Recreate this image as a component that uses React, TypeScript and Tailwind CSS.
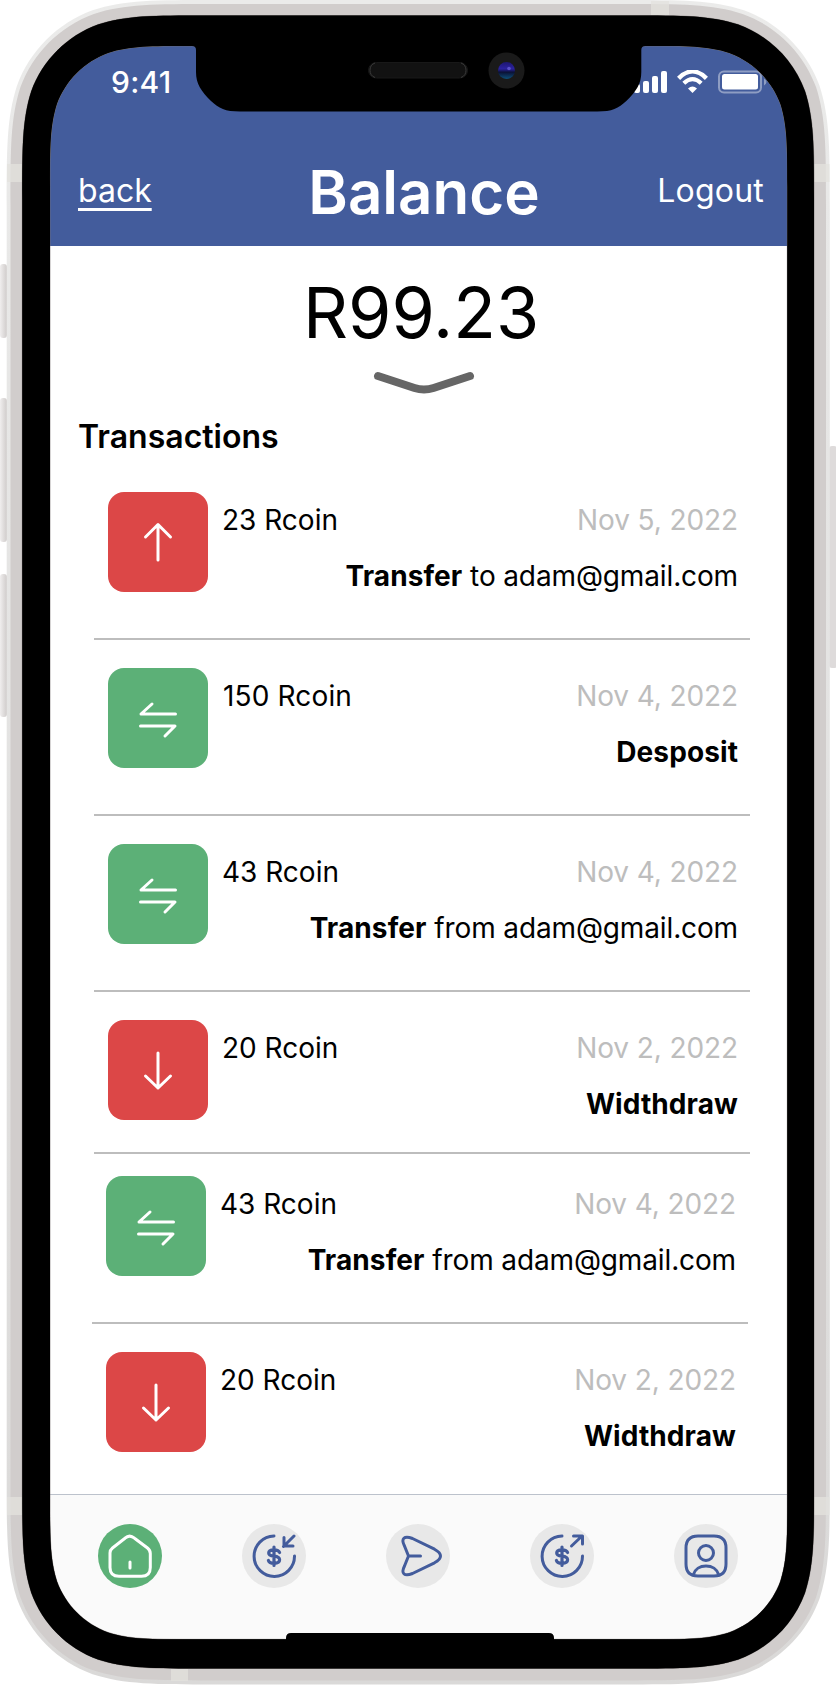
import React from "react";

type Kind = "up" | "down" | "swap";

interface Transaction {
  kind: Kind;
  amount: string;
  date: string;
  action: string;
  detail?: string;
  row: string;
}

const transactions: Transaction[] = [
  { kind: "up", amount: "23 Rcoin", date: "Nov 5, 2022", action: "Transfer", detail: " to adam@gmail.com", row: "ml-[44px] h-[176px] pt-[28px] border-b-2" },
  { kind: "swap", amount: "150 Rcoin", date: "Nov 4, 2022", action: "Desposit", row: "ml-[44px] h-[176px] pt-[28px] border-b-2" },
  { kind: "swap", amount: "43 Rcoin", date: "Nov 4, 2022", action: "Transfer", detail: " from adam@gmail.com", row: "ml-[44px] h-[176px] pt-[28px] border-b-2" },
  { kind: "down", amount: "20 Rcoin", date: "Nov 2, 2022", action: "Widthdraw", row: "ml-[44px] h-[162px] pt-[28px] border-b-2" },
  { kind: "swap", amount: "43 Rcoin", date: "Nov 4, 2022", action: "Transfer", detail: " from adam@gmail.com", row: "ml-[42px] h-[170px] pt-[22px] border-b-2" },
  { kind: "down", amount: "20 Rcoin", date: "Nov 2, 2022", action: "Widthdraw", row: "ml-[42px] h-[170px] pt-[28px]" },
];

const tilePaths: Record<Kind, string> = {
  up: "M50 68V33M37.500 45L50 32.500L62.500 45",
  down: "M50 33V68M37.500 56L50 68L62.500 56",
  swap: "M67.500 46H33L44 36M32.500 58H67L57 68",
};

function Tile({ kind }: { kind: Kind }) {
  return (
    <div className={`size-[100px] shrink-0 rounded-[16px] ${kind === "swap" ? "bg-[#5cb077]" : "bg-[#dc4747]"}`}>
      <svg viewBox="0 0 100 100" className="size-full" fill="none" stroke="#fff" strokeWidth="3" strokeLinecap="round" strokeLinejoin="round">
        <path d={tilePaths[kind]} />
      </svg>
    </div>
  );
}

function TransactionRow({ item }: { item: Transaction }) {
  return (
    <li className={`flex w-[656px] shrink-0 border-[#bdbdbd] pl-[14px] pr-[12px] text-[28px] leading-[34px] ${item.row}`}>
      <Tile kind={item.kind} />
      <div className="flex flex-1 flex-col gap-[22px] pt-[11px] pl-[14px]">
        <div className="flex justify-between">
          <span className={item.amount.startsWith("1") ? "pl-px tracking-[0.15px]" : ""}>{item.amount}</span>
          <span className="tracking-[-0.1px] text-[#bdbdbd]">{item.date}</span>
        </div>
        <p className="text-right tracking-[-0.13px] whitespace-pre">
          <b className="font-bold tracking-[0.1px]">{item.action}</b>
          {item.detail}
        </p>
      </div>
    </li>
  );
}

function StatusBar() {
  return (
    <div className="flex items-center justify-between pt-[18px] pl-[61px] pr-[9px] text-white">
      <span className="text-[30px] leading-[36px] font-medium tracking-[0.3px]">9:41</span>
      <svg width="144" height="24" viewBox="0 0 144 24" fill="#fff">
        <rect x="0" y="14" width="6" height="9" rx="2" />
        <rect x="9" y="11" width="6" height="12" rx="2" />
        <rect x="18" y="6" width="6" height="17" rx="2" />
        <rect x="27" y="1" width="6" height="22" rx="2" />
        <path d="M44.6 9.4Q58.500 -4.600 72.400 9.400" transform="translate(0 -1)" stroke="#fff" strokeWidth="4.400" fill="none" />
        <path d="M49.8 14.200Q58.500 6 67.200 14.200" transform="translate(0 -1)" stroke="#fff" strokeWidth="4.200" fill="none" />
        <path d="M54 18.500Q58.500 14.500 63 18.500L58.500 23Z" />
        <rect x="85" y="1.500" width="42" height="21" rx="5" fill="none" stroke="#fff" strokeOpacity=".4" strokeWidth="2" />
        <rect x="88" y="4" width="36" height="15.500" rx="2.500" />
        <path d="M130 8.500Q135 12 130 15.500Z" fillOpacity=".4" />
      </svg>
    </div>
  );
}

function NavIcon({ children, active = false }: { children: React.ReactNode; active?: boolean }) {
  return (
    <button className={`size-16 rounded-full ${active ? "bg-[#5cb077] text-white" : "bg-[#e8e8e8] text-[#435c9c]"}`}>
      <svg viewBox="0 0 64 64" className="size-16" fill="none" stroke="currentColor" strokeWidth="3" strokeLinecap="round" strokeLinejoin="round">
        {children}
      </svg>
    </button>
  );
}

const dollar = "M37.600 28.500C37 26.700 35 25.800 32 25.800C28.700 25.800 26.700 27 26.700 29C26.700 31.200 28.600 31.800 32 32.200C35.600 32.600 37.600 33.400 37.600 35.800C37.600 38 35.500 39.300 32 39.300C28.900 39.300 27 38.300 26.400 36.500M32 23V41.500";

function TabBar() {
  return (
    <nav className="flex h-[146px] shrink-0 justify-between border-t border-[#bcc2cc] bg-[#fafafa] pt-[29px] pl-[48px] pr-[49px]">
      <NavIcon active>
        <path d="M12 29Q12 26 14.500 24L27 14.200Q31.500 10 36.500 14.200L49.500 24Q52.300 26.300 52.300 29.500V43.500Q52.300 52.300 43.500 52.300H21Q12 52.300 12 43.500ZM32 38V44" />
      </NavIcon>
      <NavIcon>
        <path d="M32 12A20.200 20.200 0 1 0 52.500 32M52 12L41.500 22.500M42 13.500V22H51" />
        <path d={dollar} strokeWidth="3.200" />
      </NavIcon>
      <NavIcon>
        <path d="M22.500 32H34.500M22.500 32L18.500 22C14.500 14 18.500 11.500 26.500 14.500L48.500 25.200C56.500 29.500 56.500 34.500 48.500 38.800L26.500 49.500C18.500 52.500 14.500 50 18.500 42Z" />
      </NavIcon>
      <NavIcon>
        <path d="M32 12A20.200 20.200 0 1 0 52.500 32M41.500 22L52 12M43.500 12H52.500V20" />
        <path d={dollar} strokeWidth="3.200" />
      </NavIcon>
      <NavIcon>
        <path d="M24 12H40Q52 12 52 24V40Q52 52 40 52H24Q12 52 12 40V24Q12 12 24 12Z" />
        <circle cx="32" cy="29" r="7.500" />
        <path d="M19.500 50.500C21 45 26 42 32 42S43 45 44.500 50.500" />
      </NavIcon>
    </nav>
  );
}

/* Rounded rectangle with continuous-curvature corners. */
function squircle(l: number, t: number, r: number, b: number, R: number): string {
  const a = 1.5287 * R, c = 1.0885 * R, d = 0.8684 * R, e = 0.6315 * R, f = 0.0749 * R, g = 0.3728 * R, h = 0.1691 * R;
  return [
    `M${l + a} ${t}H${r - a}`,
    `C${r - c} ${t} ${r - d} ${t} ${r - e} ${t + f}`,
    `C${r - g} ${t + h} ${r - h} ${t + g} ${r - f} ${t + e}`,
    `C${r} ${t + d} ${r} ${t + c} ${r} ${t + a}V${b - a}`,
    `C${r} ${b - c} ${r} ${b - d} ${r - f} ${b - e}`,
    `C${r - h} ${b - g} ${r - g} ${b - h} ${r - e} ${b - f}`,
    `C${r - d} ${b} ${r - c} ${b} ${r - a} ${b}H${l + a}`,
    `C${l + c} ${b} ${l + d} ${b} ${l + e} ${b - f}`,
    `C${l + g} ${b - h} ${l + h} ${b - g} ${l + f} ${b - e}`,
    `C${l} ${b - d} ${l} ${b - c} ${l} ${b - a}V${t + a}`,
    `C${l} ${t + c} ${l} ${t + d} ${l + f} ${t + e}`,
    `C${l + h} ${t + g} ${l + g} ${t + h} ${l + e} ${t + f}`,
    `C${l + d} ${t} ${l + c} ${t} ${l + a} ${t}Z`,
  ].join("");
}

const outer = squircle(6.7, 0, 829.8, 1684.5, 136);
const band = squircle(10.5, 4, 826, 1680.500, 132);
const bezel = squircle(22.300, 15.500, 814, 1668.500, 120);
const glass = squircle(50, 46, 787.300, 1639.300, 92);

function PhoneFrame() {
  return (
    <svg className="pointer-events-none absolute inset-0" width="836" height="1685" viewBox="0 0 836 1685">
      <defs>
        <linearGradient id="side" x1="0" x2="1">
          <stop offset="0" stopColor="#f0eeee" />
          <stop offset="1" stopColor="#cfcbca" />
        </linearGradient>
        <linearGradient id="rim" x1="0" x2="0" y1="0" y2="1">
          <stop offset="0" stopColor="#ebebea" />
          <stop offset="1" stopColor="#dad9d8" />
        </linearGradient>
        <linearGradient id="lens" x1="0" x2="0" y1="0" y2="1">
          <stop offset="0" stopColor="#1d1670" />
          <stop offset=".4" stopColor="#2c22a0" />
          <stop offset=".6" stopColor="#0b1236" />
          <stop offset="1" stopColor="#0d4f78" />
        </linearGradient>
      </defs>
      <rect x="0" y="264" width="7" height="74" rx="3" fill="url(#side)" />
      <rect x="0" y="398" width="7" height="144" rx="3" fill="url(#side)" />
      <rect x="0" y="574" width="7" height="143" rx="3" fill="url(#side)" />
      <rect x="829" y="446" width="8" height="222" rx="3" fill="#dedbdb" />
      <path d={outer + glass} fillRule="evenodd" fill="url(#rim)" />
      <path d={band + glass} fillRule="evenodd" fill="#d1cdcc" />
      <g fill="#e3e1de" fillOpacity=".75">
        <rect x="7" y="164" width="15" height="18" />
        <rect x="814" y="164" width="15.500" height="18" />
        <rect x="7" y="1497" width="15" height="18" />
        <rect x="814" y="1497" width="15.500" height="18" />
        <rect x="651" y="1" width="18" height="14" />
        <rect x="171" y="1669" width="17" height="12" />
      </g>
      <path d={bezel + glass} fillRule="evenodd" fill="#000" stroke="#77706e" strokeWidth=".6" />
      <path d={bezel + glass} fillRule="evenodd" fill="#000" />
      <path d="M186 40V46H192Q196 46 196 50V72C196 84 201 91 211 101C219 108.500 225 111.500 240 111.500H597.300C612.300 111.500 618.300 108.500 626.300 101C636.300 91 641.300 84 641.300 72V50Q641.300 46 645.300 46H652V40Z" fill="#000" />
      <path d="M286 1645V1638Q286 1633 291 1633H549Q554 1633 554 1638V1645Z" fill="#000" />
      <rect x="368.500" y="62.500" width="99" height="15.500" rx="7.700" fill="#121212" stroke="#181818" />
      <path d="M375 63A7.750 7.750 0 0 0 375 77.500M461 63A7.750 7.750 0 0 1 461 77.500" fill="none" stroke="#3a3a3a" />
      <circle cx="506.500" cy="70.500" r="18" fill="#1a1a1a" />
      <circle cx="506.500" cy="70.500" r="8.500" fill="url(#lens)" />
      <circle cx="509" cy="68.500" r="1.800" fill="#5a50c8" />
    </svg>
  );
}

export default function App() {
  return (
    <main className="relative h-[1685px] w-[836px] overflow-hidden bg-white pt-[46px] pl-[50px] font-['Inter','Liberation_Sans',sans-serif] text-black">
      <div className="flex h-[1594px] w-[737px] flex-col overflow-hidden">
        <header className="flex h-[200px] shrink-0 flex-col bg-[#435c9c] text-white">
          <StatusBar />
          <div className="mt-[56px] grid grid-cols-[1fr_auto_1fr] items-center pr-[23px] pl-[28px]">
            <a className="mb-[2px] justify-self-start text-[32px] leading-[38px] underline decoration-[2.5px] underline-offset-[6px]">back</a>
            <h1 className="pl-[6px] text-[60px] leading-[72px] font-semibold">Balance</h1>
            <a className="mb-[2px] justify-self-end text-[32px] leading-[38px] tracking-[0.2px]">Logout</a>
          </div>
        </header>
        <section className="flex flex-1 flex-col">
          <p className="mt-[24px] pl-[253px] text-[70px] leading-[86px]">R99.23</p>
          <svg className="mt-[15px] ml-[323px]" width="102" height="24" viewBox="0 0 102 24" fill="none" stroke="#666" strokeWidth="8" strokeLinecap="round">
            <path d="M5 5L41.500 17Q51 20 60.500 17L97 5" />
          </svg>
          <h2 className="mt-[22px] pl-[28px] text-[32px] leading-[40px] font-semibold">Transactions</h2>
          <ul className="mt-[7px] flex flex-col">
            {transactions.map((item, i) => (
              <TransactionRow key={i} item={item} />
            ))}
          </ul>
        </section>
        <TabBar />
      </div>
      <PhoneFrame />
    </main>
  );
}
